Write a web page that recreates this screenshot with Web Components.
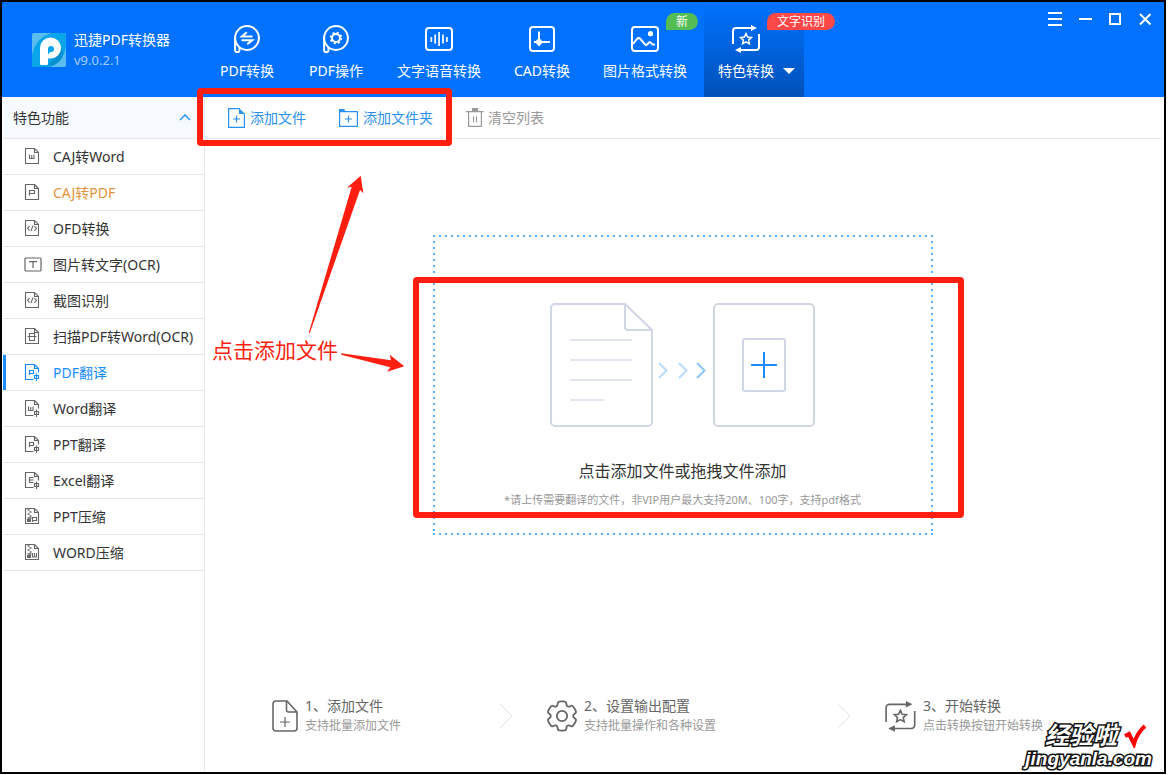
<!DOCTYPE html>
<html lang="zh-CN">
<head>
<meta charset="utf-8">
<meta name="viewport" content="width=device-width, initial-scale=1">
<title>迅捷PDF转换器</title>
<style>
  :root {
    --blue: #0072ff;
    --accent: #1a8cff;
    --line: #e8e8e8;
    --mark: #ff1e10;
  }
  body {
    margin: 0;
    background: #fff;
    color: #333;
    font: 14px/20px "Noto Sans", "Noto Sans CJK SC", sans-serif;
  }
</style>
</head>
<body>
<app-window></app-window>

<script>
// Outline of a rounded cog with n teeth.
function cog(cx, cy, outer, inner, n, a, b) {
  const pts = [];
  for (let i = 0; i < n; i++) {
    const c = i * 360 / n - 90;
    for (const [d, r] of [[-b, inner], [-a, outer], [a, outer], [b, inner]]) {
      const t = (c + d) * Math.PI / 180;
      pts.push([cx + r * Math.cos(t), cy + r * Math.sin(t)]);
    }
  }
  const mix = (p, q, k) => [p[0] + (q[0] - p[0]) * k, p[1] + (q[1] - p[1]) * k].map(v => v.toFixed(2)).join(' ');
  return pts.map((p, i) => {
    const prev = pts[(i + pts.length - 1) % pts.length], next = pts[(i + 1) % pts.length];
    return `${i ? 'L' : 'M'}${mix(p, prev, .4)}Q${mix(p, p, 0)} ${mix(p, next, .4)}`;
  }).join('') + 'Z';
}

const bubble = '<g stroke-width="2"><circle cx="14" cy="13" r="11.9"/><path d="M2.1 13V25a2.2 2.2 0 0 0 4.4 0V22"/></g>';
const sheet = '<path d="M1.5 .5H10.5L14.5 4.5V15.5H1.5ZM10.5 .5V4.5H14.5"/>';
const sheetOpen = '<path d="M9.5 15.5H1.5V.5H10.5L14.5 4.5V8.5M10.5 .5V4.5H14.5"/><path d="M10.5 11.5h4v3h-4zM12.5 9.5V17"/>';
const zip = '<path d="M3.5 2h2M5.5 4h2M3.5 6h2M5.5 8h2M3.5 10h4" stroke-width="1.5"/><path d="M3 11h4v3H3z" fill="currentColor" stroke="none"/>';
const cycle = '<path d="M1 19V6a3 3 0 0 1 3-3H20M27 9V22a3 3 0 0 1-3 3H8"/><path d="M19 0l6 3-6 3zM9 22l-6 3 6 3z" fill="currentColor" stroke="none"/><path d="M14 8.6l1.6 3.5 3.8.4-2.8 2.6.8 3.7-3.4-1.9-3.4 1.9.8-3.7-2.8-2.6 3.8-.4z" stroke-width="1.5"/>';

// name: [width, height, stroke width, markup]
const ICONS = {
  convert: [28, 28, 2, bubble + '<path d="M19.5 11.5H8.8L13.8 7.2M8.5 15.2H19.2L14.2 19.2"/>'],
  operate: [28, 28, 2, bubble + '<circle cx="14" cy="13" r="4"/><circle cx="14" cy="13" r="5.4" stroke-width="1.8" stroke-dasharray="2.1 2.14"/>'],
  audio: [28, 28, 2, '<rect x="1" y="3" width="26" height="22" rx="3"/><path d="M6.3 12v5M10.2 9.5v9M14.1 7v14M18 9.5v9M21.9 12v5" stroke-width="1.7"/>'],
  cad: [28, 28, 2, '<rect x="2" y="2" width="24" height="24" rx="3"/><path d="M11 6.5V21M6 17H22"/><circle cx="11" cy="17" r="3" fill="currentColor" stroke="none"/>'],
  image: [28, 28, 2, '<rect x="1" y="2" width="26" height="24" rx="3"/><circle cx="19.5" cy="8.7" r="2.6" fill="currentColor" stroke="none"/><path d="M2 19l4-5q1.7-1.8 3.4 0l4.6 5.4q1.2 1 2.3-.2l1.4-1.4q1.3-1.2 2.3.2 1.4 2.2 4 1.4"/>'],
  special: [28, 28, 2, cycle],
  word: [18, 18, 1.1, sheet + '<path d="M5.5 6.500v4h4.500v-4M7.750 7v3.500"/>'],
  pdf: [18, 18, 1.2, sheet + '<path d="M5.5 11.5v-5h5v3h-5"/>'],
  code: [18, 18, 1.1, sheet + '<path d="M5.5 6L3.5 8.3l2 2.3M10.5 6l2 2.3-2 2.3M9 5.5l-2 5.6"/>'],
  text: [18, 18, 1.2, '<rect x="1" y="2" width="16" height="13" rx="1"/><path d="M5 5.6h8M9 5.6v6.4"/>'],
  scan: [18, 18, 1.1, sheet + '<path d="M5.5 8V5.5h5V8M3.5 8.5h9M5.5 9v3.5h5V9"/>'],
  pdfTr: [18, 18, 1.2, sheetOpen + '<path d="M5.5 11v-4.5h4v3h-4"/>'],
  wordTr: [18, 18, 1.1, sheetOpen + '<path d="M4.500 6.500v4h4.500v-4M6.750 7v3.500"/>'],
  excelTr: [18, 18, 1.2, sheetOpen + '<path d="M9.5 5.5h-4v5h4M5.5 8h4"/>'],
  pptZip: [18, 18, 1.1, sheet + zip + '<path d="M8.5 14v-4.5h4v3h-4"/>'],
  wordZip: [18, 18, 1.1, sheet + zip + '<path d="M8.5 9v4h4v-4M10.5 9v4"/>'],
  up: [12, 8, 1.3, '<path d="M1 6L6 1l5 5"/>'],
  addFile: [18, 20, 1.2, '<path d="M11.5.6H.6V19.4H16.4V5.5"/><path d="M11 0l6 6h-6z" fill="currentColor" stroke="none"/><path d="M8.5 7.5v7M5 11h7"/>'],
  addFolder: [20, 20, 1.2, '<path d="M.6 3.6H18.4V18.4H.6Z"/><path d="M0 1h5l2 3H0z" fill="currentColor" stroke="none"/><path d="M9.5 7.5v7M6 11h7"/>'],
  trash: [18, 20, 1.2, '<path d="M0 3.6h17.5M2.6 4V18.4H15.4V4M7.5 8.5v6M10.5 8.5v6"/><path d="M6 0h6v3H6z" fill="currentColor" stroke="none"/>'],
  menu: [14, 14, 2, '<path d="M0 1h14M0 7h14M0 13h14"/>'],
  min: [14, 14, 2, '<path d="M1 7h13"/>'],
  max: [14, 14, 2, '<rect x="2" y="2" width="10" height="10"/>'],
  close: [14, 14, 2, '<path d="M2 2l10.5 10.5M12.5 2L2 12.5"/>'],
  next: [14, 26, 1, '<path d="M1 1l12 12L1 25"/>'],
  stepFile: [26, 32, 1.6, '<path d="M15 1H4a3 3 0 0 0-3 3V28a3 3 0 0 0 3 3H22a3 3 0 0 0 3-3V12zM14.5 1V10a2 2 0 0 0 2 2H25"/><path d="M13 17v10M8 22h10" stroke-width="1.2"/>'],
  stepGear: [30, 32, 1.8, `<path d="${cog(15, 16, 15.2, 11.3, 6, 16, 23)}"/><circle cx="15" cy="16" r="5.2"/>`],
  stepStart: [31, 32, 1.5, `<g transform="translate(0 1) scale(1.1)">${cycle}</g>`],
  logo: [34, 34, 0, '<rect width="34" height="34" rx="2" fill="#59bdf0"/><path d="M0 34V22Q4 4 20 0H34V12Q33 27 19 34Z" fill="#0aa4e8"/><path d="M16 32L30 16Q34 25 22 32Z" fill="#078fd0"/><path d="M8 31V15a10.500 10.500 0 1 1 10.500 10.500H16V31a1 1 0 0 1-1 1H9a1 1 0 0 1-1-1z" fill="#fff"/><path d="M16 22v-6a3 3 0 1 1 3 3q-2 0-3 3z" fill="#0aa4e8"/>'],
  upload: [265, 124, 2, `
    <g stroke="#d1d6e5">
      <path d="M75 1H5a4 4 0 0 0-4 4V119a4 4 0 0 0 4 4H98a4 4 0 0 0 4-4V27zM75 1V24a3 3 0 0 0 3 3H102"/>
      <rect x="164" y="1" width="100" height="122" rx="4"/>
      <rect x="193" y="36" width="42" height="52" rx="2"/>
      <path d="M20 37H82M20 57H82M20 77H82M20 97H54" stroke="#e2e6ee"/>
    </g>
    <path d="M109 60l7.5 7.5-7.5 7.5M129 60l7.5 7.5-7.5 7.5" stroke="#b9dcff"/>
    <path d="M147 60l7.5 7.5-7.5 7.5" stroke="#8cc6fb"/>
    <path d="M214 49V75M201 62H227" stroke="#1a8cff"/>`]
};

// Registers an element whose shadow root is cloned from a template.
// An "icon" attribute on the element names the icon of its marked ui-icon.
function define(name, html, fill) {
  const tpl = document.createElement('template');
  tpl.innerHTML = html;
  customElements.define(name, class extends HTMLElement {
    constructor() {
      super();
      const part = tpl.content.cloneNode(true);
      const icon = part.querySelector('ui-icon[data-own]');
      if (icon) icon.setAttribute('name', this.getAttribute('icon'));
      if (fill) fill(this, part);
      this.attachShadow({ mode: 'open' }).append(part);
    }
  });
}

customElements.define('ui-icon', class extends HTMLElement {
  connectedCallback() {
    if (this.shadowRoot) return;
    const [w, h, s, body] = ICONS[this.getAttribute('name')];
    this.attachShadow({ mode: 'open' }).innerHTML =
      `<style>:host{display:block;flex:none}svg{display:block}</style>
       <svg width="${w}" height="${h}" viewBox="0 0 ${w} ${h}" fill="none" stroke="currentColor" stroke-width="${s}" aria-hidden="true">${body}</svg>`;
  }
});

const reset = 'button{border:0;padding:0;margin:0;background:none;font:inherit;color:inherit;cursor:pointer}';

define('app-brand', `
<style>
  :host{display:flex;align-items:center;gap:8px;width:201px;box-sizing:border-box;padding-left:30px;color:#fff}
  p{margin:0;white-space:nowrap}
  .version{font-size:13px;color:#a3cbff}
</style>
<ui-icon name="logo"></ui-icon>
<div><p>迅捷PDF转换器</p><p class="version">v9.0.2.1</p></div>`);

define('nav-tab', `
<style>
  ${reset}
  :host{display:block;color:#fff}
  button{display:grid;grid-template-columns:auto auto;justify-items:center;justify-content:center;align-content:start;row-gap:8px;min-width:88px;height:95px;padding:23px 16px 0;white-space:nowrap}
  :host([active]) button{padding:23px 9px 0 14px;background:linear-gradient(#0072ff,#0051b8)}
  .icon{position:relative}
  .label{grid-column:1}
  .badge{position:absolute;z-index:1;left:35px;top:-12px;padding:0 10px;font-size:12px;line-height:17px;border-radius:9px 9px 9px 0;background:var(--badge)}
  .caret{display:none;grid-column:2;grid-row:2;align-self:center;margin-left:9px;border:solid transparent;border-width:6px 6px 0;border-top-color:#fff}
  :host([active]) .caret{display:block}
</style>
<button type="button"><span class="icon"><ui-icon data-own></ui-icon></span><span class="label"><slot></slot></span><span class="caret"></span></button>`,
(el, part) => {
  if (!el.hasAttribute('badge')) return;
  const b = document.createElement('span');
  b.className = 'badge';
  b.textContent = el.getAttribute('badge');
  part.querySelector('.icon').append(b);
});

define('window-button', `
<style>
  ${reset}
  :host{display:block;color:#fff}
  button{display:grid;place-items:center;width:30px;height:34px}
</style>
<button type="button"><ui-icon data-own></ui-icon></button>`,
(el, part) => part.querySelector('button').setAttribute('aria-label', el.getAttribute('label')));

define('title-bar', `
<style>
  :host{display:flex;background:var(--blue)}
  nav{display:flex;gap:1px}
  .controls{display:flex;align-items:flex-start;margin-left:auto;padding-right:4px}
</style>
<app-brand></app-brand>
<nav>
  <nav-tab icon="convert">PDF转换</nav-tab>
  <nav-tab icon="operate">PDF操作</nav-tab>
  <nav-tab icon="audio">文字语音转换</nav-tab>
  <nav-tab icon="cad">CAD转换</nav-tab>
  <nav-tab icon="image" badge="新" style="--badge:#53bd53">图片格式转换</nav-tab>
  <nav-tab icon="special" badge="文字识别" active style="--badge:#ff4848">特色转换</nav-tab>
</nav>
<div class="controls">
  <window-button icon="menu" label="菜单"></window-button>
  <window-button icon="min" label="最小化"></window-button>
  <window-button icon="max" label="最大化"></window-button>
  <window-button icon="close" label="关闭"></window-button>
</div>`);

define('side-item', `
<style>
  :host{display:block;border-bottom:1px solid var(--line)}
  a{display:flex;align-items:center;gap:11px;height:35px;padding-left:18px;border-left:3px solid transparent;color:var(--item,#333);line-height:22px;text-decoration:none;white-space:nowrap}
  ui-icon{color:#666}
  :host([active]) a{border-left-color:var(--accent);color:var(--accent)}
  :host([active]) ui-icon{color:inherit}
</style>
<a href="#"><ui-icon data-own></ui-icon><span><slot></slot></span></a>`);

define('side-menu', `
<style>
  ${reset}
  :host{display:block;width:201px;flex:none;padding-left:1px;border-right:1px solid var(--line)}
  .head{display:flex;align-items:center;justify-content:space-between;width:100%;height:42px;padding:0 13px 0 10px;background:#f6faff;border-bottom:1px solid var(--line)}
  .head ui-icon{color:var(--accent)}
</style>
<button class="head" type="button" aria-expanded="true">特色功能<ui-icon name="up"></ui-icon></button>
<nav>
  <side-item icon="word">CAJ转Word</side-item>
  <side-item icon="pdf" style="--item:#df933a">CAJ转PDF</side-item>
  <side-item icon="code">OFD转换</side-item>
  <side-item icon="text">图片转文字(OCR)</side-item>
  <side-item icon="code">截图识别</side-item>
  <side-item icon="scan">扫描PDF转Word(OCR)</side-item>
  <side-item icon="pdfTr" active>PDF翻译</side-item>
  <side-item icon="wordTr">Word翻译</side-item>
  <side-item icon="pdfTr">PPT翻译</side-item>
  <side-item icon="excelTr">Excel翻译</side-item>
  <side-item icon="pptZip">PPT压缩</side-item>
  <side-item icon="wordZip">WORD压缩</side-item>
</nav>`);

define('tool-button', `
<style>
  ${reset}
  :host{display:block;color:#2b90ee}
  :host([muted]){color:#999}
  button{display:flex;align-items:center;gap:4px;white-space:nowrap}
</style>
<button type="button"><ui-icon data-own></ui-icon><slot></slot></button>`);

define('mark-box', '<style>:host{position:absolute;z-index:2;box-sizing:border-box;border:6px solid var(--mark);border-radius:4px;pointer-events:none}</style>');

define('tool-bar', `
<style>
  :host{display:flex;align-items:center;gap:33px;position:relative;box-sizing:border-box;height:42px;padding:1px 0 0 23px;border-bottom:1px solid var(--line)}
  mark-box{left:-8px;top:-9px;width:255px;height:58px}
</style>
<tool-button icon="addFile">添加文件</tool-button>
<tool-button icon="addFolder">添加文件夹</tool-button>
<tool-button icon="trash" muted>清空列表</tool-button>
<mark-box></mark-box>`);

define('drop-zone', `
<style>
  ${reset}
  :host{display:block;position:relative;width:500px;max-width:100%}
  button{
    --h:repeating-linear-gradient(90deg,#5cb0fa 0 2px,transparent 2px 6px);
    --v:repeating-linear-gradient(#5cb0fa 0 2px,transparent 2px 6px);
    display:flex;flex-direction:column;align-items:center;width:100%;height:300px;padding-top:68px;
    background:var(--h) top/100% 2px no-repeat,var(--h) bottom/100% 2px no-repeat,var(--v) left/2px 100% no-repeat,var(--v) right/2px 100% no-repeat
  }
  .title{margin-top:32px;font-size:16px;line-height:24px}
  .hint{margin-top:9px;font-size:11px;line-height:16px;color:#999;white-space:nowrap}
  mark-box{left:-20px;top:42px;width:551px;height:241px}
</style>
<button type="button"><ui-icon name="upload"></ui-icon><span class="title">点击添加文件或拖拽文件添加</span><span class="hint">*请上传需要翻译的文件，非VIP用户最大支持20M、100字，支持pdf格式</span></button>
<mark-box></mark-box>`);

define('step-item', `
<style>
  :host{display:flex;align-items:center;gap:7px;color:#666;white-space:nowrap}
  .sub{display:block;font-size:12px;color:#999}
</style>
<ui-icon data-own></ui-icon><div><slot></slot><span class="sub"><slot name="sub"></slot></span></div>`);

define('step-list', `
<style>
  :host{display:grid;grid-template-columns:227fr 48px 290fr 48px 277fr;align-items:center;padding:66px 0 36px 67px}
  ui-icon{color:#e2e2e2}
</style>
<step-item icon="stepFile">1、添加文件<span slot="sub">支持批量添加文件</span></step-item>
<ui-icon name="next"></ui-icon>
<step-item icon="stepGear">2、设置输出配置<span slot="sub">支持批量操作和各种设置</span></step-item>
<ui-icon name="next"></ui-icon>
<step-item icon="stepStart">3、开始转换<span slot="sub">点击转换按钮开始转换</span></step-item>`);

// Red note with two arrows, laid over the work area.
define('call-out', `
<style>
  :host{position:absolute;z-index:3;left:5px;top:77px;width:200px;height:200px;color:var(--mark);pointer-events:none}
  svg{position:absolute;inset:0}
  span{position:absolute;left:2px;top:162px;font-size:21px;line-height:28px;white-space:nowrap}
</style>
<svg width="200" height="200" fill="currentColor" aria-hidden="true">
  <path d="M150.7 1.7L137 13.7 141.7 12.7 98.7 159H99.8L150 16 153.3 19.3Z"/>
  <path d="M194.3 192.3L179.7 180.7 181 186.3 131.3 179.3V180.7L180.3 193.3 177 197.7Z"/>
</svg>
<span>点击添加文件</span>`);

define('site-mark', `
<style>
  :host{position:absolute;z-index:3;right:12px;bottom:2px;color:#fff;pointer-events:none}
  div{display:flex;align-items:center;justify-content:flex-end;gap:7px;padding-right:6px}
  b{display:block;font-family:"Liberation Sans","Noto Sans CJK SC",sans-serif;font-style:italic;-webkit-text-stroke:3px #111;paint-order:stroke fill}
  .cn{font-size:24px;line-height:24px}
  .url{font-size:19px;line-height:22px}
</style>
<div><b class="cn">经验啦</b><svg width="22" height="24" fill="none" stroke="#f00" stroke-width="4" aria-hidden="true"><path d="M1 12L5 10 10 20Q13 9 21 2"/></svg></div>
<b class="url">jingyanla.com</b>`);

define('work-area', `
<style>
  :host{display:flex;flex-direction:column;position:relative;flex:1;min-width:0;padding-right:2px}
  .stage{flex:1;display:grid;place-items:center;padding:20px 22px 20px 20px}
</style>
<tool-bar></tool-bar>
<div class="stage"><drop-zone></drop-zone></div>
<step-list></step-list>
<call-out></call-out>
<site-mark></site-mark>`);

define('app-window', `
<style>
  :host{display:flex;flex-direction:column;box-sizing:border-box;min-height:calc(100vh - 1px);margin-right:2px;border:2px solid #000;background:#fff}
  main{display:flex;flex:1}
</style>
<title-bar></title-bar>
<main><side-menu></side-menu><work-area></work-area></main>`);
</script>
</body>
</html>
